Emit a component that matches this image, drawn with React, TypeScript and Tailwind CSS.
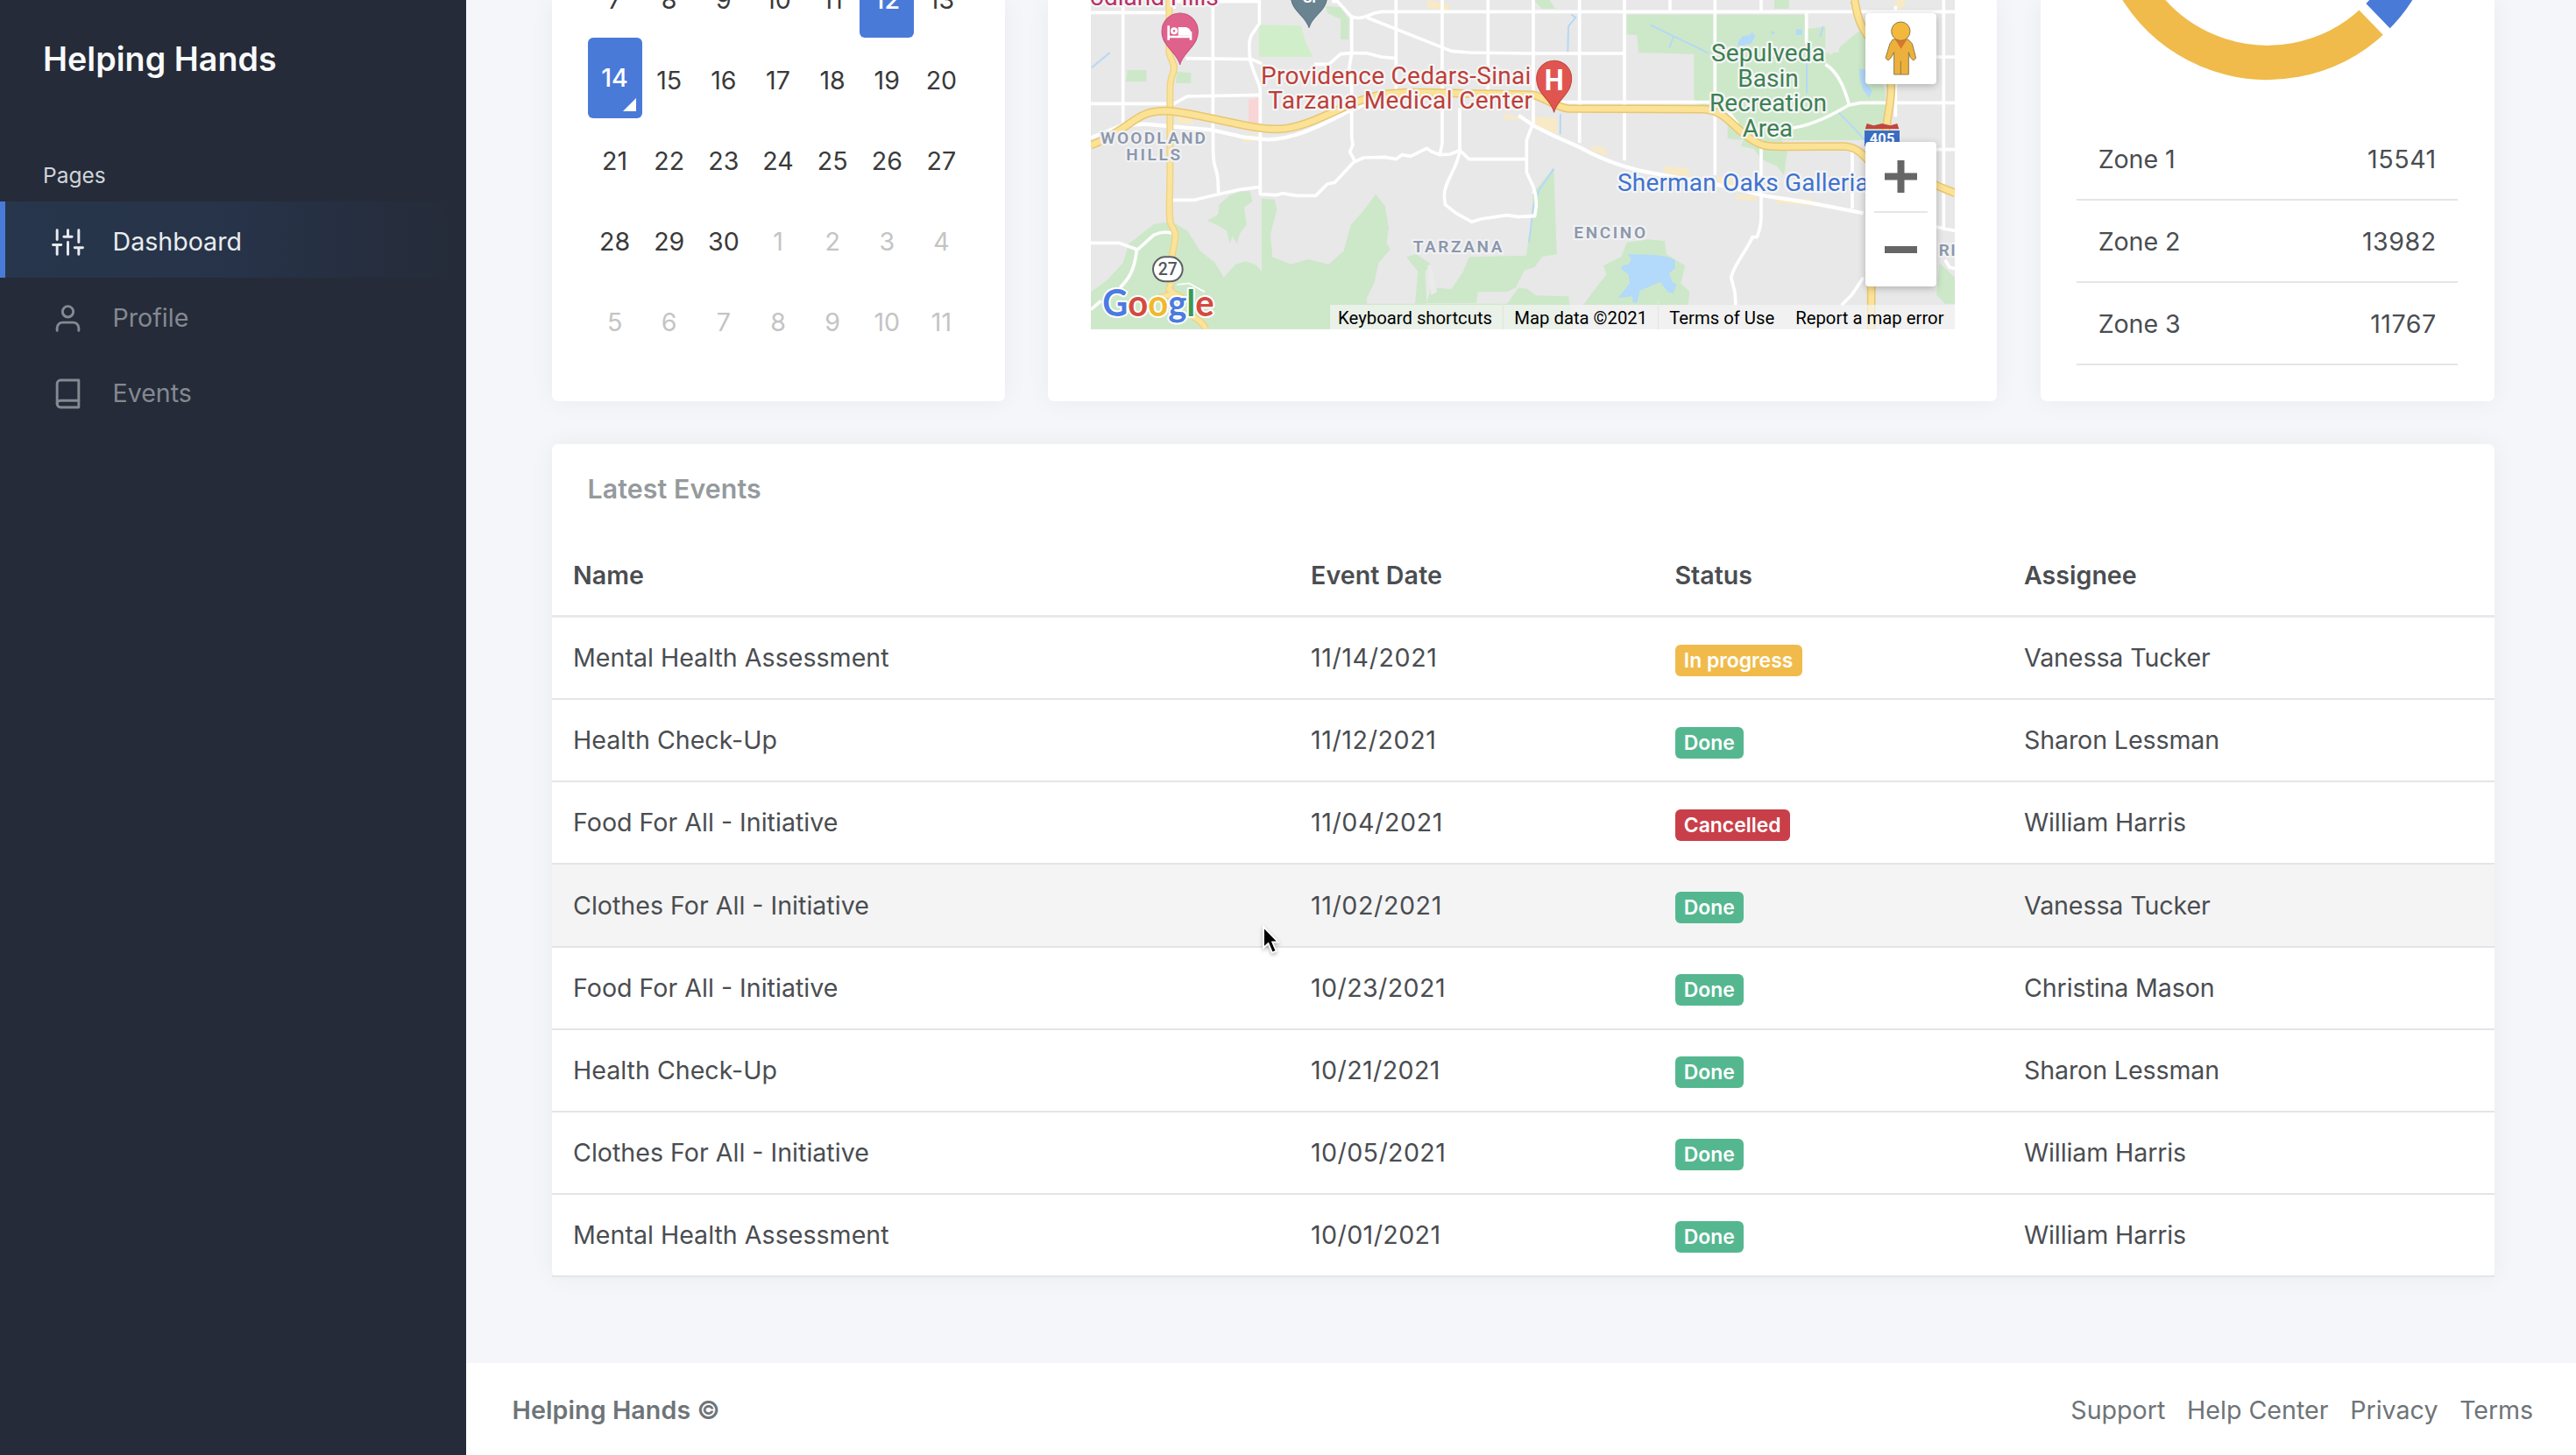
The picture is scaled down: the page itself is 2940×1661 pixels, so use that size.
import React from "react";

type Status = "In progress" | "Done" | "Cancelled";

const events: { name: string; date: string; status: Status; assignee: string; hovered?: boolean }[] = [
  { name: "Mental Health Assessment", date: "11/14/2021", status: "In progress", assignee: "Vanessa Tucker" },
  { name: "Health Check-Up", date: "11/12/2021", status: "Done", assignee: "Sharon Lessman" },
  { name: "Food For All - Initiative", date: "11/04/2021", status: "Cancelled", assignee: "William Harris" },
  { name: "Clothes For All - Initiative", date: "11/02/2021", status: "Done", assignee: "Vanessa Tucker", hovered: true },
  { name: "Food For All - Initiative", date: "10/23/2021", status: "Done", assignee: "Christina Mason" },
  { name: "Health Check-Up", date: "10/21/2021", status: "Done", assignee: "Sharon Lessman" },
  { name: "Clothes For All - Initiative", date: "10/05/2021", status: "Done", assignee: "William Harris" },
  { name: "Mental Health Assessment", date: "10/01/2021", status: "Done", assignee: "William Harris" },
];

const badgeColors: Record<Status, string> = {
  "In progress": "bg-[#f0bb4b]",
  Done: "bg-[#55b790]",
  Cancelled: "bg-[#c93f49]",
};

const zones = [
  ["Zone 1", "15541"],
  ["Zone 2", "13982"],
  ["Zone 3", "11767"],
];

function NavIcon({ children }: { children: React.ReactNode }) {
  return (
    <svg
      className="h-[37px] w-[37px]"
      viewBox="0 0 24 24"
      fill="none"
      stroke="currentColor"
      strokeWidth="1.9"
      strokeLinecap="round"
      strokeLinejoin="round"
    >
      {children}
    </svg>
  );
}

function Sidebar() {
  return (
    <aside className="flex w-[532px] shrink-0 flex-col bg-[#252b38]">
      <div className="flex h-[134px] items-center pt-[2px] pl-[49px] text-[37.6px] font-semibold tracking-[0.05px] text-[#f8f9fa]">
        Helping Hands
      </div>
      <div className="flex h-[96px] items-center pt-[37px] pl-[49px] text-[24.5px] text-[#ced4da]">Pages</div>
      <nav className="text-[28.6px] text-[#848992]">
        <a className="flex h-[87px] items-center border-l-[6.5px] border-[#4a7ad8] bg-linear-to-r from-[#27364c] via-[#273349] to-[#252b38] pt-[6px] pl-[53px] text-[#e9ecef]">
          <NavIcon>
            <path d="M4 21v-7M4 10V3M12 21v-9M12 8V3M20 21v-5M20 12V3M1 14h6M9 8h6M17 16h6" />
          </NavIcon>
          <span className="ml-[32.5px]">Dashboard</span>
        </a>
        <a className="flex h-[86.5px] items-center pt-[6px] pl-[59px]">
          <NavIcon>
            <path d="M20 21v-2a4 4 0 0 0-4-4H8a4 4 0 0 0-4 4v2" />
            <circle cx="12" cy="7" r="4" />
          </NavIcon>
          <span className="ml-[32.5px]">Profile</span>
        </a>
        <a className="flex h-[86.5px] items-center pt-[6px] pl-[59px]">
          <NavIcon>
            <path d="M4 19.5A2.5 2.5 0 0 1 6.5 17H20" />
            <path d="M6.5 2H20v20H6.5A2.5 2.5 0 0 1 4 19.5v-15A2.5 2.5 0 0 1 6.5 2z" />
          </NavIcon>
          <span className="ml-[32.5px]">Events</span>
        </a>
      </nav>
    </aside>
  );
}

function Calendar() {
  const days = [7, 8, 9, 10, 11, 12, 13, 14, 15, 16, 17, 18, 19, 20, 21, 22, 23, 24, 25, 26, 27, 28, 29, 30, 1, 2, 3, 4, 5, 6, 7, 8, 9, 10, 11];
  return (
    <section className="flex w-[517px] flex-col justify-end rounded-b-[7px] bg-white px-[41px] pb-[46.3px] shadow-[0_0_28px_rgba(33,37,41,0.05)]">
      <div className="grid shrink-0 auto-rows-[92.15px] grid-cols-7 text-[28.6px]">
        {days.map((day, i) => {
          if (i === 5 || i === 7) {
            return (
              <div
                key={i}
                className={
                  i === 5
                    ? "flex items-center justify-center rounded-[6px] bg-[#4a7ad8] pt-[7px] font-medium text-white"
                    : "relative flex items-center justify-center rounded-[6px] bg-[#4a7ad8] pt-[2px] font-medium text-white"
                }
              >
                {day}
                {i === 7 && (
                  <svg className="absolute right-[7px] bottom-[8px] h-[15px] w-[15px]" viewBox="0 0 15 15">
                    <path d="M15 0V15H0Z" fill="#fff" />
                  </svg>
                )}
              </div>
            );
          }
          return (
            <div
              key={i}
              className={
                i > 23
                  ? "flex items-center justify-center pt-[7.4px] text-[#c4c4c4]"
                  : "flex items-center justify-center pt-[7.4px] text-[#3a3a3a]"
              }
            >
              {day}
            </div>
          );
        })}
      </div>
    </section>
  );
}

function MapDrawing() {
  const green = "#cde8c9";
  const halo = { stroke: "#f4f5f5", strokeWidth: 14, strokeLinejoin: "round" as const, paintOrder: "stroke" };
  const area = { stroke: "#f0f1f3", strokeWidth: 14, strokeLinejoin: "round" as const, paintOrder: "stroke" };
  const highways = [
    "M15 497C50 487 100 455 140 428C190 392 215 378 280 380C350 385 440 410 560 433C660 452 710 440 780 412C870 375 930 340 1000 326C1100 308 1250 322 1400 322L1530 325C1570 335 1610 368 1650 372L2110 374C2180 375 2210 430 2260 465C2310 505 2330 502 2400 502L2590 501C2640 502 2660 530 2700 575",
    "M2630 0C2640 60 2650 90 2680 130C2730 190 2755 240 2755 300C2755 360 2740 400 2738 450",
    "M2900 630C2930 645 2950 650 2975 662",
    "M2687 960V1127",
  ];
  const minor = [
    "M283 0V180C290 210 305 220 298 245C285 280 286 290 286 350V600C285 690 280 750 290 770C310 800 305 810 298 850L290 890",
    "M292 965L282 990L300 1005L250 1020M300 1005L330 1020M365 1085C385 1095 400 1105 408 1127",
  ];
  return (
    <svg className="block h-[375.7px] w-[986px]" viewBox="15 0 2958 1127" preserveAspectRatio="none" fontFamily="Roboto, sans-serif">
      <rect x="15" width="2958" height="1127" fill="#e8e8e8" />
      <g fill={green}>
        <path d="M15 1127V1000L70 960L125 900L145 835L230 768L290 758L345 790L390 860L440 900L470 950L510 905L545 895L580 907L600 930V680L645 683L652 720L630 800L637 880L700 905L760 888L830 905L880 860L905 770L950 720L990 665L1022 705L1035 780L1028 830L1040 855L1000 900L985 970L960 1020V1040H1655V1127Z" />
        <path d="M590 85L735 88L750 145L775 195L590 195Z" fill="#d1eecb" />
        <path d="M820 20L870 25L898 65V135H870V65L825 45Z" />
        <path d="M140 240H205V280H135ZM310 245L358 250V285H305Z" />
        <path d="M560 655L568 690L540 710L548 770L525 800L515 835L500 810L490 835L480 790L445 770L412 755L450 735L455 700L490 670L530 655Z" />
        <path d="M1095 880L1130 870L1180 905L1160 930L1165 1040H1125L1135 930ZM1180 985L1250 990L1290 930L1310 880L1505 875L1520 780L1530 660L1600 575L1610 870L1560 880L1535 915L1500 925L1470 985L1440 1000H1340L1335 1038H1165Z" />
        <path d="M1440 1040L1480 985L1510 990L1540 1012L1650 1015L1655 1050H1440Z" />
        <path d="M1530 0H1585L1605 30H1560ZM2355 0H2405V30H2355Z" />
        <path d="M1850 50H2460V100L2545 90V190L2640 110L2670 100L2690 210L2735 310L2735 400L2740 480H2380L2400 520L2388 600L2365 570L2310 545L2285 510L2240 500L2250 480L2195 475V400L2110 370L2080 340V185L1890 180L1885 120L1850 118Z" />
        <path d="M1850 830L1920 820L1980 825L1985 870L2050 910L2035 970L2065 1000L2060 1045H1700L1780 940L1770 910L1830 880Z" />
        <path d="M2920 900L2973 950V1040H2940L2910 1010Z" />
      </g>
      <path d="M1180 905L1200 1000L1180 1010L1168 910Z" fill="#ebebeb" />
      <path d="M2465 50H2620L2590 110L2575 180H2530V90L2480 85Z" fill="#e8e8e8" />
      <g fill="#f8eac6">
        <path d="M1170 0L1240 15L1245 35L1165 28ZM1430 390L1500 405L1430 410ZM1530 400L1610 405L1615 460L1525 425ZM1730 500L1775 505L1785 535L1730 515ZM1980 570L2055 575L2070 610L1975 590ZM2160 605L2225 610V640L2160 630ZM2225 665L2300 670L2290 688L2225 680ZM2360 680L2480 680L2490 705L2360 695ZM530 465L600 460L590 475L545 490ZM2770 0H2805L2795 30H2770ZM310 395L355 400L370 425H310Z" />
      </g>
      <path d="M555 340L590 335V430L555 435Z" fill="#f9d5d5" />
      <g fill="#b3d9fb">
        <path d="M1855 870C1900 875 1960 865 2015 890V920L1995 935L2005 965L2020 975L2010 1005L1990 1000L1965 965L1930 980L1895 995L1885 1038L1870 1035L1870 1015L1820 1020L1840 995L1860 970L1855 940L1830 920L1835 910L1855 905L1865 890Z" />
        <path d="M2230 145L2245 125L2270 120L2280 110L2290 125L2275 150L2230 158ZM2345 107H2355V118H2345ZM2430 100H2450V120H2430ZM2645 235L2668 240L2665 280L2690 310L2680 335L2660 310L2650 280Z" />
      </g>
      <g fill="none" stroke="#b5d8f5" strokeWidth="6">
        <path d="M18 232L80 180M1600 578L1550 650L1530 710L1515 830M1660 50L1675 60L1650 90L1648 180M1930 85L2130 182M2010 125L1995 165M2466 200V320M2575 385L2620 430L2665 480M2522 90L2512 125M1623 390L1622 460" />
      </g>
      <g fill="none" stroke="#fff" strokeWidth="11" strokeLinejoin="round">
        <path d="M15 43H290M125 0V430M290 5H595M300 0V30M433 20V450C435 500 430 540 440 570C455 610 450 640 452 665M290 685L370 685L410 675L452 665L520 650L595 640M592 0V80L565 120C550 150 560 180 560 205C575 260 595 290 595 310V665L650 668L670 662L720 670H785L825 630L850 625L915 555L950 540L1020 538L1060 545L1080 530L1110 535L1165 508L1180 518L1210 530L1245 528L1278 515L1310 545H1500" />
        <path d="M340 200L565 203L600 218M780 220H830L870 185L905 182L960 182L1010 195L1060 200M15 355H300L345 330L600 325M840 5H860L905 55C930 68 950 60 985 45L1010 40H2973M960 60L1250 175L1310 180L1500 183H1840M908 60V182L900 230L908 300V470L912 495L902 520L918 550M1060 0V310M1218 0V490L1210 530M1375 0V310M1278 370V515C1270 580 1225 620 1225 670L1228 700L1265 730L1320 760L1350 750L1440 737L1480 743L1535 738" />
        <path d="M15 472L120 430L200 425L280 432L430 445L540 470L620 478C720 475 800 430 900 380L960 355M1480 395L1530 430L1600 465L1690 505C1780 555 1860 580 1950 595L2200 640L2320 670L2480 695L2660 730" strokeWidth="13" />
        <path d="M1530 0V420L1507 480V590L1530 640C1545 680 1540 710 1535 740L1500 742M1500 545H1507M1688 0V490M1842 0V550M1998 0V35M2152 0V600M2310 0V35M2310 480V740C2310 780 2300 800 2296 812L2280 812C2260 860 2220 900 2207 950L2220 1000L2223 1045M2465 40V150M2530 220C2580 250 2600 320 2610 355M2400 440C2480 435 2560 390 2610 360L2650 352H2973M1620 350H2150L2200 385L2230 425M2622 520V715M2900 195H2973M2900 512H2973M2935 0V790M2770 20V400M2900 775L2973 790M2940 890L2955 915L2973 920M2660 950L2620 1010L2585 1045" />
        <path d="M15 832H110L175 855L230 805C250 795 270 790 300 800M172 855C165 930 140 960 115 985M15 1060L50 1030" />
        <path d="M310 975L350 970L405 1000M1535 655L1525 660" strokeWidth="5" />
      </g>
      <g fill="none" strokeLinejoin="round">
        {minor.map((d) => <path key={d} d={d} stroke="#efd285" strokeWidth="24" />)}
        {minor.map((d) => <path key={d + "f"} d={d} stroke="#fae39a" strokeWidth="16" />)}
        {highways.map((d) => <path key={d} d={d} stroke="#e8c672" strokeWidth="29" />)}
        {highways.map((d) => <path key={d + "f"} d={d} stroke="#fbe294" strokeWidth="20" />)}
      </g>

      {/* Route shields */}
      <rect x="228" y="880" width="101" height="84" rx="42" fill="#fff" stroke="#5c6064" strokeWidth="6" />
      <text x="278" y="942" fontSize="58" fontWeight="500" fill="#55585c" textAnchor="middle">27</text>
      <path d="M2672 423L2695 430L2724 423L2753 430L2776 423L2782 442H2666Z" fill="#c1463f" />
      <path d="M2664 447H2784V500H2664Z" fill="#3b6dc4" />
      <text x="2724" y="493" fontSize="49" fontWeight="700" fill="#fff" textAnchor="middle" textLength="86">405</text>

      {/* Place markers */}
      <path d="M320 222C312 180 258 160 258 107A62 62 0 0 1 382 107C382 160 328 180 320 222Z" fill="#df628c" stroke="#c9527d" strokeWidth="3" />
      <g fill="none" stroke="#fff" strokeWidth="8">
        <path d="M281 88V137M357 108V137M281 126H357" />
        <circle cx="300" cy="106" r="8" />
        <path d="M318 97H340C350 99 354 104 355 118H318Z" fill="#fff" />
      </g>
      <path d="M762 95C750 50 700 40 700 -15H824C824 40 772 50 762 95Z" fill="#698391" stroke="#557382" strokeWidth="3" />
      <text x="765" y="10" fontSize="50" fontWeight="700" fill="#fff" textAnchor="middle">Gr</text>
      <path d="M1601 385C1592 340 1541 325 1541 268A60 60 0 0 1 1661 268C1661 325 1610 340 1601 385Z" fill="#e0554f" stroke="#c5423d" strokeWidth="3" />
      <text x="1601" y="308" fontSize="100" fontWeight="700" fill="#fff" textAnchor="middle" textLength="66" lengthAdjust="spacingAndGlyphs">H</text>

      {/* Place labels */}
      <g fontSize="84">
        <text x="12" y="17" fill="#b92f68" textLength="440" {...halo}>odland Hills</text>
        <g fill="#bd3e39">
          <text x="597" y="287" textLength="925" {...halo}>Providence Cedars-Sinai</text>
          <text x="622" y="373" textLength="905" {...halo}>Tarzana Medical Center</text>
        </g>
        <g fill="#3c8052" textAnchor="middle">
          <text x="2334" y="210" textLength="390" {...halo}>Sepulveda</text>
          <text x="2334" y="296" textLength="208" {...halo}>Basin</text>
          <text x="2334" y="382" textLength="402" {...halo}>Recreation</text>
          <text x="2332" y="467" textLength="172" {...halo}>Area</text>
        </g>
        <text x="1818" y="655" fill="#3f72d0" textLength="860" {...halo}>Sherman Oaks Galleria</text>
      </g>
      <g fontSize="57" fontWeight="600" fill="#8c97ab">
        <text x="48" y="492" textLength="360" {...area}>WOODLAND</text>
        <text x="136" y="550" textLength="185" {...area}>HILLS</text>
        <text x="1118" y="863" textLength="305" {...area}>TARZANA</text>
        <text x="1669" y="815" textLength="245" {...area}>ENCINO</text>
        <text x="2918" y="876" textLength="57" {...area}>RI</text>
      </g>
      <text
        x="55"
        y="1082"
        fontFamily="Lato, sans-serif"
        fontSize="125"
        fontWeight="700"
        stroke="#fff"
        strokeWidth="12"
        strokeLinejoin="round"
        paintOrder="stroke"
        textLength="382"
        lengthAdjust="spacingAndGlyphs"
      >
        <tspan fill="#4b7be0">G</tspan>
        <tspan fill="#d54a40">o</tspan>
        <tspan fill="#f0b92c">o</tspan>
        <tspan fill="#4b7be0">g</tspan>
        <tspan fill="#3c9a52">l</tspan>
        <tspan fill="#d54a40">e</tspan>
      </text>
    </svg>
  );
}

function MapCard() {
  return (
    <section className="flex w-[1083px] flex-col justify-end rounded-b-[7px] bg-white px-[48.5px] pb-[81.8px] shadow-[0_0_28px_rgba(33,37,41,0.05)]">
      <div className="relative overflow-hidden">
        <MapDrawing />
        <div className="absolute top-[14.5px] right-[21px] flex h-[81px] w-[81px] items-center justify-center rounded-[4px] bg-white shadow-[0_2px_8px_rgba(0,0,0,0.25)]">
          <svg className="h-[64px] w-[37px]" viewBox="0 0 111 192" stroke="#8b7a4c" strokeWidth="3">
            <path d="M28 66H80L94 80L107 130L98 138L88 128L82 110V186H32V110L22 128L12 138L3 130L18 80Z" fill="#ecb13c" strokeLinejoin="round" />
            <path d="M55 140V186" />
            <path d="M36 66H76L56 98Z" fill="#d9762c" stroke="none" />
            <circle cx="55" cy="38" r="32" fill="#f2b93d" />
          </svg>
        </div>
        <div className="absolute right-[21px] bottom-[49px] flex h-[165px] w-[81px] flex-col items-center rounded-[4px] bg-white shadow-[0_2px_8px_rgba(0,0,0,0.25)]">
          <div className="flex h-[82px] w-[61px] items-center justify-center border-b-2 border-[#e6e6e6]">
            <svg className="h-[37px] w-[37px]" viewBox="0 0 37 37">
              <path d="M14.5 0H22.5V14.5H37V22.5H22.5V37H14.5V22.5H0V14.5H14.5Z" fill="#666" />
            </svg>
          </div>
          <div className="flex h-[84px] items-center">
            <div className="h-[8.5px] w-[37px] bg-[#666]" />
          </div>
        </div>
        <div className="absolute right-0 bottom-0 flex h-[28px] items-center bg-[#f5f5f5]/70 font-[Roboto,sans-serif] text-[20.3px] whitespace-nowrap text-black">
          <span className="pr-[12.3px] pl-[9px] pt-[4px]">Keyboard shortcuts</span>
          <span className="border-l border-[#dfe8dd] px-[12px] pt-[4px]">Map data ©2021</span>
          <span className="border-l border-[#dfe8dd] px-[12px] pt-[4px]">Terms of Use</span>
          <span className="px-[12px] pt-[4px]">Report a map error</span>
        </div>
      </div>
    </section>
  );
}

function ZoneCard() {
  return (
    <section className="flex w-[518.5px] flex-col justify-end rounded-b-[7px] bg-white px-[41.7px] pb-[40.8px] shadow-[0_0_28px_rgba(33,37,41,0.05)]">
      <svg className="h-[134.4px] w-full shrink-0" viewBox="2370 0 435 134.4">
        <g fill="none" strokeWidth="39.3">
          <path d="M2411.6 -104.8A176.2 176.2 0 0 0 2710 22.2" stroke="#f0bb4b" />
          <path d="M2710 22.2A176.2 176.2 0 0 0 2764 -104.8" stroke="#4a7ad8" />
          <path d="M2587.8 -104.8L2733 45.8" stroke="#fff" strokeWidth="10.9" />
        </g>
      </svg>
      <div className="text-[28.6px] text-[#4a4d51]">
        {zones.map(([zone, count]) => (
          <div key={zone} className="flex h-[94.1px] items-center justify-between border-b-2 border-[#e4e5e6] px-[24.5px] pt-[3.5px]">
            <span className="tracking-[-0.1px]">{zone}</span>
            <span className="tracking-[0.55px]">{count}</span>
          </div>
        ))}
      </div>
    </section>
  );
}

function EventsTable() {
  return (
    <section className="relative mt-[49.2px] w-[2217.5px] overflow-visible rounded-[7px] bg-white shadow-[0_0_28px_rgba(33,37,41,0.05)]">
      <h2 className="flex h-[103px] items-center pt-[2px] pl-[41px] text-[30.3px] font-semibold tracking-[0.1px] text-[#959a9d]">
        Latest Events
      </h2>
      <div className="text-[28.6px] text-[#4a4d51]">
        <div className="grid h-[95.5px] grid-cols-[842px_415.5px_398.5px_1fr] items-center border-b-[3px] border-[#e8e9ea] pt-[3.5px] pl-[24.5px] font-semibold">
          <span>Name</span>
          <span className="tracking-[0.1px]">Event Date</span>
          <span>Status</span>
          <span>Assignee</span>
        </div>
        {events.map((e) => (
          <div
            key={e.date}
            className={
              e.hovered
                ? "grid h-[94.1px] grid-cols-[842px_415.5px_398.5px_1fr] items-center border-b-2 border-[#e4e5e6] bg-[#f4f4f4] pt-[1px] pl-[24.5px]"
                : "grid h-[94.1px] grid-cols-[842px_415.5px_398.5px_1fr] items-center border-b-2 border-[#e4e5e6] pt-[1px] pl-[24.5px]"
            }
          >
            <span>{e.name}</span>
            <span className={e.date.startsWith("11") ? "tracking-[0.6px]" : "tracking-[0.4px]"}>{e.date}</span>
            <span className="flex pt-[4px]">
              <span className={`flex h-[36px] items-center rounded-[6px] px-[10.3px] text-[22.9px] font-semibold text-white ${badgeColors[e.status]}`}>
                {e.status}
              </span>
            </span>
            <span className="tracking-[-0.12px]">{e.assignee}</span>
          </div>
        ))}
      </div>
      <svg className="absolute top-[549px] left-[809px] h-[36px] w-[24px] drop-shadow-[0_2px_2px_rgba(0,0,0,0.3)]" viewBox="0 0 24 36">
        <path d="M3 2V26L8.5 21L13 31.5L17.5 29.5L13.2 19.5H20Z" fill="#000" stroke="#fff" strokeWidth="1.8" />
      </svg>
    </section>
  );
}

export default function App() {
  return (
    <div className="flex h-[1661px] w-[2940px] overflow-hidden bg-[#f4f6fa] font-[Inter,sans-serif] leading-[1.5]">
      <Sidebar />
      <div className="flex flex-1 flex-col">
        <main className="flex h-[1556px] flex-col pl-[97.5px]">
          <div className="flex h-[457.5px] w-[2217.5px] shrink-0 justify-between">
            <Calendar />
            <MapCard />
            <ZoneCard />
          </div>
          <EventsTable />
        </main>
        <footer className="flex flex-1 items-center justify-between bg-white pt-[3px] pr-[49px] pl-[52.5px] text-[28.6px] text-[#6e7478]">
          <strong className="font-semibold tracking-[0.1px]">Helping Hands ©</strong>
          <div className="flex gap-[24.8px]">
            <span>Support</span>
            <span>Help Center</span>
            <span>Privacy</span>
            <span className="tracking-[-0.1px]">Terms</span>
          </div>
        </footer>
      </div>
    </div>
  );
}
